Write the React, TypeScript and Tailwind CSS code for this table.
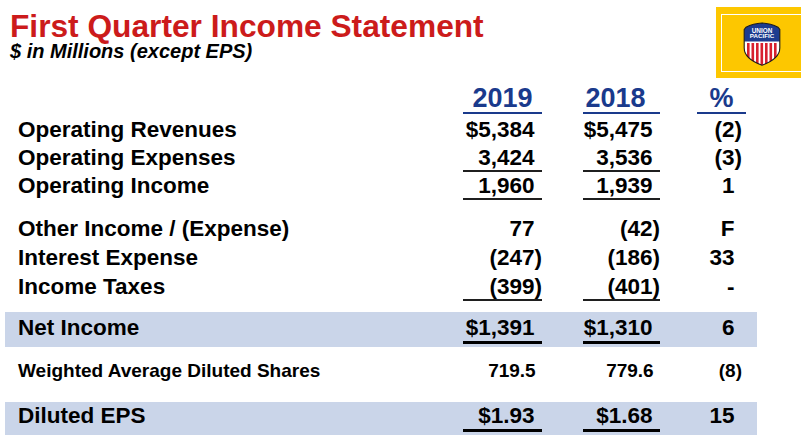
import React from "react";

type Line = {
  label: string;
  y19: string;
  y18: string;
  pct: string;
  underline?: boolean;
};

const OPERATING: Line[] = [
  { label: "Operating Revenues", y19: "$5,384", y18: "$5,475", pct: "(2)" },
  { label: "Operating Expenses", y19: "3,424", y18: "3,536", pct: "(3)", underline: true },
  { label: "Operating Income", y19: "1,960", y18: "1,939", pct: "1", underline: true },
];

const OTHER: Line[] = [
  { label: "Other Income / (Expense)", y19: "77", y18: "(42)", pct: "F" },
  { label: "Interest Expense", y19: "(247)", y18: "(186)", pct: "33" },
  { label: "Income Taxes", y19: "(399)", y18: "(401)", pct: "-", underline: true },
];

// accounting style: positives leave room for the closing paren
function Num({ v }: { v: string }) {
  return (
    <>
      {v}
      {!v.endsWith(")") && <span className="invisible">)</span>}
    </>
  );
}

function Row({
  line,
  rowCls,
  textCls,
  lineCls,
}: {
  line: Line;
  rowCls: string;
  textCls: string;
  lineCls: string;
}) {
  return (
    <div className={`ml-[5px] flex w-[752px] pl-[13px] pr-[11px] ${rowCls}`}>
      <div className={`flex-1 ${textCls}`}>{line.label}</div>
      <div className={`w-[79px] text-right ${textCls} ${lineCls}`}>
        <Num v={line.y19} />
      </div>
      <div className={`ml-[41px] w-[77px] text-right ${textCls} ${lineCls}`}>
        <Num v={line.y18} />
      </div>
      <div className={`ml-[37px] w-[49px] pr-[4px] text-right ${textCls}`}>
        <Num v={line.pct} />
      </div>
    </div>
  );
}

function Shield() {
  const outline =
    "M1.2 7.5 L3 5.2 C8 2.6 13 1.3 19 1 C25 1.3 30 2.6 35 5.2 L36.8 7.5 V26 C36.8 34.5 28.5 39.8 19 43.3 C9.5 39.8 1.2 34.5 1.2 26 Z";
  const stripes = [4, 8.5, 13, 17.5, 22, 26.5, 31];
  return (
    <svg width="38" height="44" viewBox="0 0 38 44">
      <defs>
        <clipPath id="up-shield">
          <path d={outline} />
        </clipPath>
      </defs>
      <g clipPath="url(#up-shield)">
        <rect x="0" y="0" width="38" height="44" fill="#ffffff" />
        <rect x="0" y="0" width="38" height="19.5" fill="#1d3c8f" />
        {stripes.map((x) => (
          <rect key={x} x={x} y="21" width="2.6" height="24" fill="#d7202f" />
        ))}
      </g>
      <path d={outline} fill="none" stroke="#1b1b1b" strokeWidth="1.1" />
      <text
        x="19"
        y="10.6"
        textAnchor="middle"
        fontSize="6.4"
        fontWeight="bold"
        fill="#ffffff"
        fontFamily="Liberation Sans, Arial, sans-serif"
      >
        UNION
      </text>
      <text
        x="19"
        y="16.4"
        textAnchor="middle"
        fontSize="6.2"
        fontWeight="bold"
        fill="#ffffff"
        fontFamily="Liberation Sans, Arial, sans-serif"
      >
        PACIFIC
      </text>
    </svg>
  );
}

export default function App() {
  return (
    <div className="relative h-[439px] w-[801px] overflow-hidden bg-white font-['Liberation_Sans',Arial,sans-serif] font-bold text-black">
      {/* Header */}
      <div className="flex h-[85px] items-start">
        <div className="pl-[10px] pt-[10px]">
          <h1 className="text-[31.7px] leading-[32px] text-[#cc1b1b]">
            First Quarter Income Statement
          </h1>
          <p className="text-[20px] italic leading-[19px]">$ in Millions (except EPS)</p>
        </div>
        <div className="ml-auto mr-[-10px] mt-[7px] h-[71px] w-[95px] bg-[#fdc700] pl-[5px] pt-[7px]">
          <div className="h-[58px] w-[100px] border border-white pl-[21px] pt-[7px]">
            <Shield />
          </div>
        </div>
      </div>

      {/* Column headings */}
      <div className="ml-[5px] flex h-[29px] w-[752px] pl-[13px] pr-[11px] text-[27px] leading-[27px] text-[#1a3a8c]">
        <div className="flex-1" />
        <div className="w-[79px] text-center shadow-[inset_0_-2px_0_#1a3a8c]">2019</div>
        <div className="ml-[41px] w-[77px] pr-[12px] text-center shadow-[inset_0_-2px_0_#1a3a8c]">
          2018
        </div>
        <div className="ml-[37px] w-[49px] text-center shadow-[inset_0_-2px_0_#1a3a8c]">%</div>
      </div>

      <div className="mt-[2px] text-[22.5px]">
        {OPERATING.map((line) => (
          <Row
            key={line.label}
            line={line}
            rowCls="h-[28px]"
            textCls="leading-[28px]"
            lineCls={line.underline ? "shadow-[inset_0_-2px_0_#1f1f1f]" : ""}
          />
        ))}
      </div>

      <div className="mt-[14px] text-[22.5px]">
        {OTHER.map((line) => (
          <Row
            key={line.label}
            line={line}
            rowCls="h-[29px]"
            textCls="leading-[29px]"
            lineCls={line.underline ? "shadow-[inset_0_-2px_0_#1f1f1f]" : ""}
          />
        ))}
      </div>

      {/* Net income band */}
      <div className="mt-[11px] text-[22.5px]">
        <Row
          line={{ label: "Net Income", y19: "$1,391", y18: "$1,310", pct: "6" }}
          rowCls="h-[35px] bg-[#cad5e9]"
          textCls="pt-[2px] leading-[27px]"
          lineCls="h-[32px] shadow-[inset_0_-3px_0_#000]"
        />
      </div>

      <div className="text-[19px]">
        <Row
          line={{ label: "Weighted Average Diluted Shares", y19: "719.5", y18: "779.6", pct: "(8)" }}
          rowCls="h-[55px]"
          textCls="pt-[14px] leading-[19px]"
          lineCls=""
        />
      </div>

      {/* Diluted EPS band */}
      <div className="text-[22.5px]">
        <Row
          line={{ label: "Diluted EPS", y19: "$1.93", y18: "$1.68", pct: "15" }}
          rowCls="h-[33px] bg-[#cad5e9]"
          textCls="pt-[1px] leading-[26px]"
          lineCls="h-[30px] shadow-[inset_0_-3px_0_#000]"
        />
      </div>
    </div>
  );
}
